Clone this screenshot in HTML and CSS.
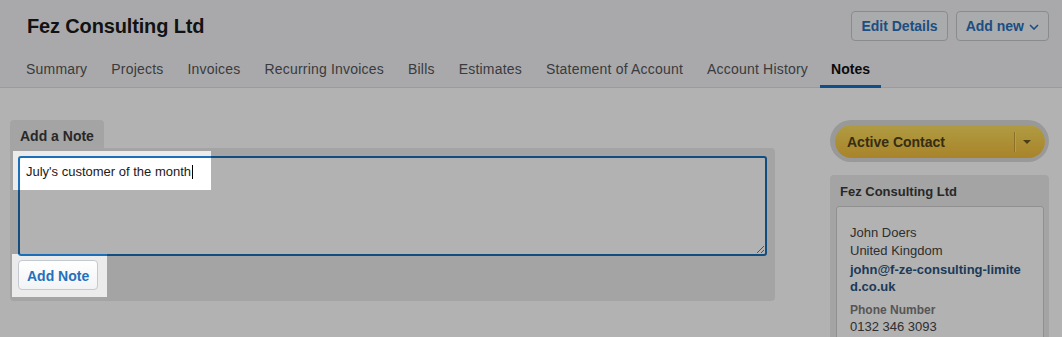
FILE: index.html
```html
<!DOCTYPE html>
<html lang="en">
<head>
<meta charset="utf-8">
<title>Fez Consulting Ltd - Notes</title>
<link rel="stylesheet" href="styles.css">
</head>
<body>
<div class="page">
  <header class="top">
    <div class="top-row">
      <h1 class="title">Fez Consulting Ltd</h1>
      <div class="actions">
        <button class="btn">Edit Details</button>
        <button class="btn">Add new
          <svg class="chev" width="10" height="6" viewBox="0 0 10 6"><polyline points="1,1 5,5 9,1" fill="none" stroke="currentColor" stroke-width="1.6"/></svg>
        </button>
      </div>
    </div>
    <nav class="tabs">
      <a class="tab">Summary</a>
      <a class="tab">Projects</a>
      <a class="tab">Invoices</a>
      <a class="tab">Recurring Invoices</a>
      <a class="tab">Bills</a>
      <a class="tab">Estimates</a>
      <a class="tab">Statement of Account</a>
      <a class="tab">Account History</a>
      <a class="tab active">Notes</a>
    </nav>
  </header>

  <div class="content">
    <main class="main">
      <div class="note-tab">Add a Note</div>
      <div class="note-panel">
        <div class="textarea">July's customer of the month<span class="caret"></span>
          <svg class="grip" width="9" height="9" viewBox="0 0 9 9"><line x1="1" y1="8" x2="8" y2="1" stroke="#777" stroke-width="1"/><line x1="5" y1="8" x2="8" y2="5" stroke="#777" stroke-width="1"/></svg>
        </div>
        <button class="btn-add">Add Note</button>
      </div>
    </main>

    <aside class="side">
      <div class="status">
        <div class="status-inner">
          <span class="status-label">Active Contact</span>
          <span class="status-div"></span>
          <span class="status-tri"></span>
        </div>
      </div>
      <div class="card">
        <div class="card-title">Fez Consulting Ltd</div>
        <div class="card-body">
          <div class="line">John Doers</div>
          <div class="line">United Kingdom</div>
          <div class="line email">john@f-ze-consulting-limited.co.uk</div>
          <div class="label">Phone Number</div>
          <div class="line">0132 346 3093</div>
        </div>
      </div>
    </aside>
  </div>

  <div class="overlay"></div>
</div>
</body>
</html>
```

FILE: styles.css
```css
* { box-sizing: border-box; }

html, body {
  margin: 0;
  padding: 0;
  background: #ffffff;
  font-family: "Liberation Sans", Arial, Helvetica, sans-serif;
  color: #222;
}

.page {
  position: relative;
  height: 337px;
  overflow: hidden;
}

/* Header */
.top {
  background: #f2f3f6;
  border-bottom: 1px solid #dedfe1;
  padding: 0 13px 0 14px;
}

.top-row {
  display: flex;
  align-items: center;
  justify-content: space-between;
  padding-top: 11px;
  height: 41px;
}

.title {
  margin: 0 0 0 13px;
  font-size: 20px;
  font-weight: bold;
  letter-spacing: -0.15px;
  color: #1a1a1a;
}

.actions {
  display: flex;
  gap: 8px;
}

.btn {
  display: flex;
  align-items: center;
  gap: 5px;
  height: 30px;
  padding: 0 9px;
  border: 1px solid #c6c7c9;
  border-radius: 4px;
  background: #f4f5f7;
  font-family: inherit;
  font-size: 14px;
  font-weight: bold;
  color: #2a70bb;
}

.chev { margin-top: 1px; }

.tabs {
  display: flex;
  margin-top: 9px;
  margin-bottom: -1px;
}

.tab {
  font-size: 14px;
  line-height: 17px;
  letter-spacing: 0.2px;
  padding: 11px 12px 7px;
  border-bottom: 3px solid transparent;
  color: #545556;
}

.tab.active {
  font-weight: bold;
  letter-spacing: 0;
  color: #111;
  border-bottom-color: #1272c4;
  padding-left: 11px;
  padding-right: 11px;
}

/* Content */
.content {
  display: grid;
  grid-template-columns: 765px 219px;
  column-gap: 55px;
  padding: 32px 13px 0 10px;
}

.note-tab {
  display: inline-block;
  height: 28px;
  line-height: 32px;
  padding: 0 10px;
  background: #ebebeb;
  border-radius: 4px 4px 0 0;
  font-size: 14px;
  font-weight: bold;
  color: #3a3a3a;
}

.note-panel {
  background: #ebebeb;
  border-radius: 0 4px 4px 4px;
  padding: 8px 8px 11px 8px;
}

.textarea {
  position: relative;
  height: 100px;
  border: 2px solid #1a6fb8;
  border-radius: 3px;
  background: #fff;
  padding: 6px 6px 4px;
  font-size: 13px;
  line-height: 16px;
  color: #1a1a1a;
}

.caret {
  display: inline-block;
  width: 1px;
  height: 14px;
  background: #000;
  vertical-align: -3px;
  margin-left: 1px;
}

.grip {
  position: absolute;
  right: 0;
  bottom: 0;
}

.btn-add {
  display: block;
  margin-top: 4px;
  height: 30px;
  padding: 1px 8px 0;
  border: 1px solid #c3c9d1;
  border-radius: 4px;
  background: linear-gradient(#ffffff, #f2f3f5);
  font-family: inherit;
  font-size: 14px;
  font-weight: bold;
  color: #2470bc;
}

/* Sidebar */
.status {
  height: 42px;
  border-radius: 21px;
  background: #dcdcdc;
  padding: 5px 4px 4px 5px;
}

.status-inner {
  display: flex;
  align-items: center;
  height: 33px;
  border-radius: 17px;
  background: linear-gradient(#fcdf60, #f2bd3c);
  padding: 1px 14px 0 12px;
}

.status-label {
  flex: 1;
  font-size: 14px;
  font-weight: bold;
  color: #4d421c;
}

.status-div {
  width: 1px;
  height: 20px;
  background: #caa23a;
  box-shadow: 1px 0 0 #fde37a;
  margin-right: 8px;
}

.status-tri {
  width: 0;
  height: 0;
  border-left: 4px solid transparent;
  border-right: 4px solid transparent;
  border-top: 4px solid #6b5a24;
}

.card {
  margin-top: 13px;
  background: #ebebeb;
  border-radius: 4px;
  padding: 0 5px 0 6px;
  height: 200px;
}

.card-title {
  height: 31px;
  line-height: 34px;
  padding-left: 4px;
  font-size: 13px;
  font-weight: bold;
  color: #3a3a3a;
}

.card-body {
  background: #fff;
  border: 1px solid #cfcfcf;
  border-radius: 3px;
  padding: 17px 13px 14px;
  height: 200px;
}

.line {
  font-size: 13px;
  line-height: 18px;
  color: #444;
}

.email {
  font-weight: bold;
  color: #2a5380;
  word-break: break-all;
  width: 180px;
  line-height: 17px;
  margin-top: 1px;
}

.label {
  margin-top: 7px;
  font-size: 12px;
  line-height: 16px;
  font-weight: bold;
  color: #7c7c7c;
}

/* Tour overlay with highlighted cut-outs */
.overlay {
  position: fixed;
  inset: 0;
  background: rgba(0, 0, 0, 0.3);
  clip-path: path(evenodd, 'M0 0H1062V337H0Z M13 151H211V190H13Z M12 254H107V297H12Z');
}
```
